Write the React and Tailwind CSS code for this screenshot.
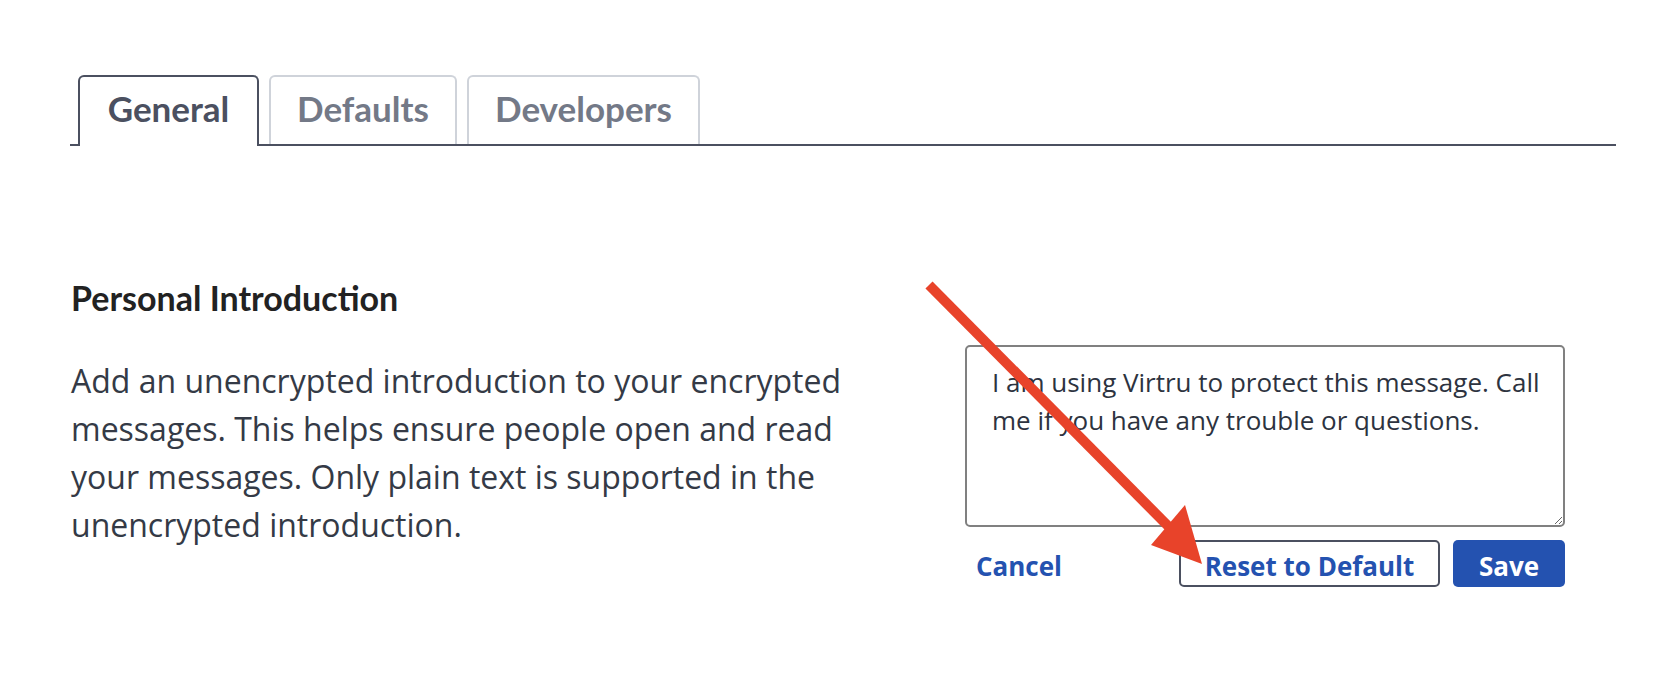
import React from 'react';

const tabs = [
  { name: 'General', width: 'w-[181px]', active: true },
  { name: 'Defaults', width: 'w-[188px]' },
  { name: 'Developers', width: 'w-[233px]' }
];

const introText =
  'I am using Virtru to protect this message. Call me if you have any trouble or questions.';

const App = () => {
  return (
    <div className="relative min-h-[676px] bg-white pt-[75px] pl-[70px] font-['Open_Sans',sans-serif]">
      {/* Tabs */}
      <div className="flex w-[1546px] items-end gap-[10px] border-b-2 border-[#4b5060] pl-[8px]">
        {tabs.map((tab) =>
          tab.active ? (
            <div
              key={tab.name}
              className={`${tab.width} -mb-[2px] flex h-[71px] items-center justify-center rounded-t-[6px] border-2 border-b-0 border-[#4b5060] bg-white pb-[6px] font-['Lato',sans-serif] text-[35px] font-bold text-[#4b5060]`}
            >
              {tab.name}
            </div>
          ) : (
            <div
              key={tab.name}
              className={`${tab.width} flex h-[69px] items-center justify-center rounded-t-[6px] border-2 border-b-0 border-[#cfd3da] pb-[4px] font-['Lato',sans-serif] text-[35px] font-bold text-[#737987]`}
            >
              {tab.name}
            </div>
          )
        )}
      </div>

      {/* Personal introduction */}
      <div className="mt-[134px] flex">
        <div className="w-[800px] pl-[1px]">
          <h2 className="font-['Lato',sans-serif] text-[34px] leading-[36px] font-bold text-[#222222]">
            Personal Introduction
          </h2>
          <p className="mt-[41px] text-[32px] leading-[48px] text-[#343a46]">
            Add an unencrypted introduction to your encrypted messages. This helps ensure people
            open and read your messages. Only plain text is supported in the unencrypted
            introduction.
          </p>
        </div>

        <div className="ml-[95px] w-[600px] pt-[65px]">
          <textarea
            defaultValue={introText}
            className="block h-[182px] w-[600px] rounded-[5px] border-2 border-[#808080] pt-[16px] pr-[12px] pl-[25px] text-[26px] leading-[38px] text-[#2d3340] outline-none"
          />
          <div className="mt-[13px] flex items-center">
            <button className="h-[47px] px-[11px] pt-[5px] text-[26px] font-bold text-[#2452b0]">
              Cancel
            </button>
            <button className="ml-auto flex h-[47px] w-[261px] items-center justify-center rounded-[5px] border-2 border-[#4b5060] pt-[5px] text-[26px] font-bold text-[#2452b0]">
              Reset to Default
            </button>
            <button className="ml-[13px] flex h-[47px] w-[112px] items-center justify-center rounded-[5px] bg-[#2452b0] pt-[5px] text-[26px] font-bold text-white">
              Save
            </button>
          </div>
        </div>
      </div>

      {/* Annotation arrow */}
      <svg
        className="pointer-events-none absolute top-0 left-0"
        width="1654"
        height="676"
        viewBox="0 0 1654 676"
      >
        <line x1="929" y1="285" x2="1172" y2="530" stroke="#e8432a" strokeWidth="10" />
        <polygon points="1202,564 1151,545 1185,505" fill="#e8432a" />
      </svg>
    </div>
  );
};

export default App;
